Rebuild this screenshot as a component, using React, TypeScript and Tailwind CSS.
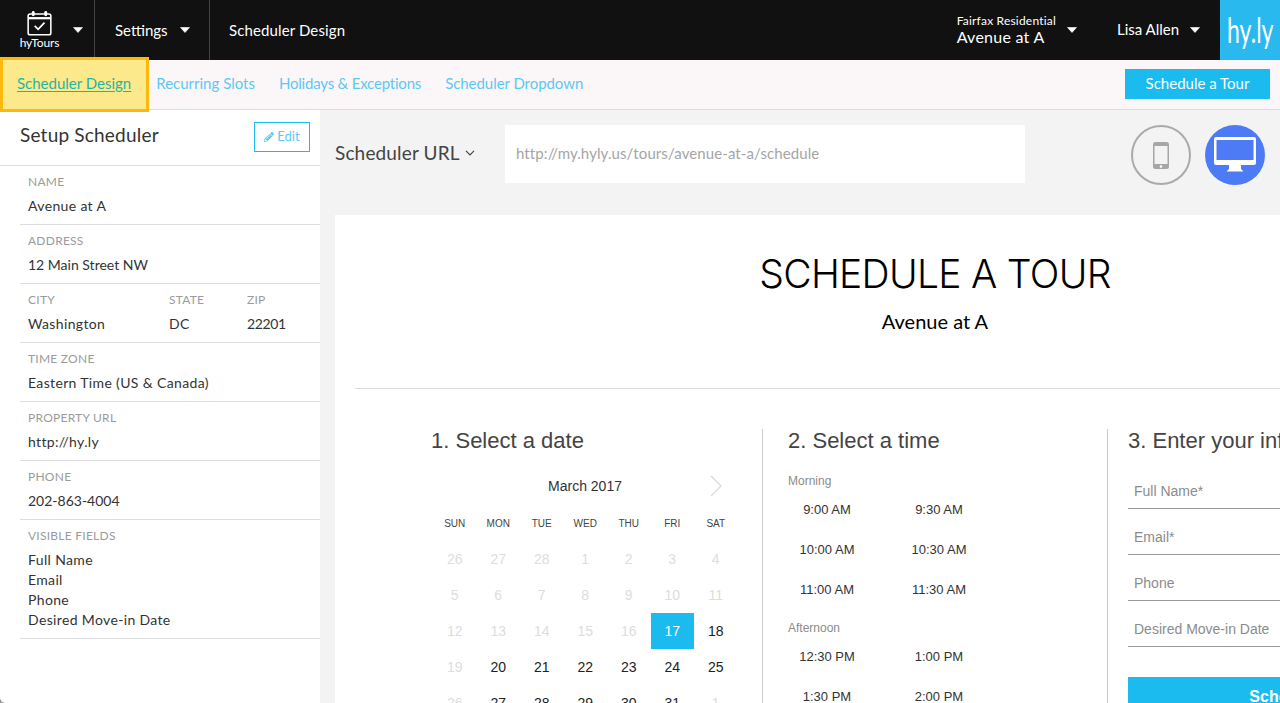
import React from "react";
import { FaPencilAlt } from "react-icons/fa";

const Caret = ({ className = "" }: { className?: string }) => (
  <svg width="10" height="6" viewBox="0 0 10 6" className={className}><path d="M0.5 0.5h9L5 5.5z" fill="#fff" stroke="#fff" strokeWidth="0.6" strokeLinejoin="round" /></svg>
);

const Field = ({ label, children }: { label: string; children: React.ReactNode }) => (
  <div>
    <div className="text-[12px] leading-[16px] tracking-[0.25px] text-[#9b9b9b]">{label}</div>
    <div className="mt-[6px] text-[14px] leading-[20px] tracking-[0.35px] text-[#333]">{children}</div>
  </div>
);

const Row = ({ children }: { children: React.ReactNode }) => (
  <div className="h-[59px] border-b border-[#ddd] pl-[8px] pt-[8px]">{children}</div>
);

const weeks: [string, number][][] = [
  [["26", 0], ["27", 0], ["28", 0], ["1", 0], ["2", 0], ["3", 0], ["4", 0]],
  [["5", 0], ["6", 0], ["7", 0], ["8", 0], ["9", 0], ["10", 0], ["11", 0]],
  [["12", 0], ["13", 0], ["14", 0], ["15", 0], ["16", 0], ["17", 2], ["18", 1]],
  [["19", 0], ["20", 1], ["21", 1], ["22", 1], ["23", 1], ["24", 1], ["25", 1]],
  [["26", 0], ["27", 1], ["28", 1], ["29", 1], ["30", 1], ["31", 1], ["1", 0]],
];

const Times = ({ items }: { items: string[] }) => (
  <div className="-ml-[17px] grid w-[224px] grid-cols-2">
    {items.map((t) => (
      <div key={t} className="flex h-[40px] items-center justify-center text-[13px] text-[#333]">{t}</div>
    ))}
  </div>
);

const Input = ({ label }: { label: string }) => (
  <div className="flex h-[46px] items-end border-b border-[#999] pb-[7px] pl-[6px] text-[14px] leading-[20px] text-[#8c8c8c]">{label}</div>
);

export default function App() {
  return (
    <div className="h-[703px] w-[1280px] overflow-hidden bg-[#999]">
      <div className="relative flex h-[703px] w-[1280px] flex-col overflow-hidden rounded-bl-[6px] bg-[#f3f3f3] font-['Lato',sans-serif]">
        {/* top bar */}
        <header className="flex h-[60px] shrink-0 items-stretch bg-[#111] text-white">
          <div className="flex w-[95px] items-center border-r border-[#444] pl-[20px]">
            <div className="flex w-[39px] flex-col items-center">
              <svg width="25" height="26" viewBox="0 0 26 27" fill="none" stroke="#fff">
                <rect x="1.2" y="4.2" width="23.6" height="21.6" rx="2" strokeWidth="1.6" />
                <path d="M1.2 8.5h23.6" strokeWidth="2.4" />
                <rect x="5" y="1" width="3" height="5.5" rx="1.5" fill="#fff" stroke="none" />
                <rect x="18" y="1" width="3" height="5.5" rx="1.5" fill="#fff" stroke="none" />
                <path d="M8 16.5l3.6 3.6 6.6-7" strokeWidth="1.8" />
              </svg>
              <div className="text-[12px] leading-[14px] tracking-[-0.1px]">hyTours</div>
            </div>
            <Caret className="ml-[14px]" />
          </div>
          <div className="flex w-[115px] items-center border-r border-[#444] pl-[20px] text-[15px]">
            Settings<Caret className="ml-[12px]" />
          </div>
          <div className="flex flex-1 items-center pl-[19px] text-[15px] tracking-[0.12px]">Scheduler Design</div>
          <div className="flex items-center pr-[20px]">
            <div className="pb-[1px]">
              <div className="text-[12px] leading-[14px] tracking-[0.2px]">Fairfax Residential</div>
              <div className="text-[16px] leading-[18px] tracking-[0.25px]">Avenue at A</div>
            </div>
            <Caret className="ml-[11px]" />
            <div className="ml-[40px] w-[63px] pb-[2px] text-[15px]">Lisa Allen</div>
            <Caret className="ml-[10px]" />
          </div>
          <div className="flex w-[60px] items-center justify-center bg-[#29b9ee] pb-[2px] text-[34px]">
            <span className="inline-block scale-x-[0.68]">hy.ly</span>
          </div>
        </header>

        {/* sub nav */}
        <nav className="flex h-[50px] shrink-0 items-center border-b border-[#ddd] bg-[#fbf7f8] pb-[1px] pl-[17px] pr-[10px] text-[15px] text-[#5bc8f5]">
          <div className="flex pb-[2px]">
            <a className="relative z-10 text-[#1eb6a4] underline underline-offset-2">Scheduler Design</a>
            <a className="ml-[25px]">Recurring Slots</a>
            <a className="ml-[24px] tracking-[-0.2px]">Holidays &amp; Exceptions</a>
            <a className="ml-[24px] tracking-[-0.05px]">Scheduler Dropdown</a>
          </div>
          <button className="ml-auto h-[30px] w-[145px] bg-[#1bbbf0] pb-[2px] text-[15px] text-white">Schedule a Tour</button>
        </nav>
        <div className="pointer-events-none absolute left-0 top-[57px] h-[55px] w-[149px] border-[3px] border-[#fdb90b] bg-[#fce98c]" />

        <div className="flex min-h-0 flex-1">
          {/* sidebar */}
          <aside className="w-[320px] shrink-0 bg-white">
            <div className="flex h-[56px] items-start justify-between border-b border-[#ddd] pl-[20px] pr-[10px] pt-[12px]">
              <h2 className="text-[19px] leading-[26px] tracking-[0.2px] text-[#333]">Setup Scheduler</h2>
              <button className="flex h-[30px] w-[56px] items-center justify-center gap-[3px] border border-[#1bbbf0] text-[13px] text-[#5bc8f5]">
                <FaPencilAlt className="h-[10px] w-[10px]" />Edit
              </button>
            </div>
            <div className="pl-[20px]">
              <Row><Field label="NAME">Avenue at A</Field></Row>
              <Row><Field label="ADDRESS"><span className="tracking-normal">12 Main Street NW</span></Field></Row>
              <Row>
                <div className="flex">
                  <div className="w-[141px]"><Field label="CITY">Washington</Field></div>
                  <div className="w-[78px]"><Field label="STATE">DC</Field></div>
                  <div><Field label="ZIP"><span className="tracking-[-0.4px]">22201</span></Field></div>
                </div>
              </Row>
              <Row><Field label="TIME ZONE">Eastern Time (US &amp; Canada)</Field></Row>
              <Row><Field label="PROPERTY URL">http://hy.ly</Field></Row>
              <Row><Field label="PHONE"><span className="tracking-normal">202-863-4004</span></Field></Row>
              <div className="h-[119px] border-b border-[#ddd] pl-[8px] pt-[8px]">
                <Field label="VISIBLE FIELDS">
                  <div>Full Name</div>
                  <div>Email</div>
                  <div>Phone</div>
                  <div>Desired Move-in Date</div>
                </Field>
              </div>
            </div>
          </aside>

          {/* main */}
          <main className="min-w-0 flex-1 overflow-hidden pl-[15px] pt-[15px]">
            <div className="flex h-[60px] items-start">
              <div className="flex h-[56px] w-[170px] items-center text-[19px] tracking-[0.15px] text-[#444]">
                Scheduler URL
                <svg width="10" height="6" viewBox="0 0 10 6" fill="none" stroke="#444" strokeWidth="1.2" className="ml-[5px]"><path d="M1 0.8l4 4 4-4" /></svg>
              </div>
              <div className="flex h-[58px] w-[520px] items-center bg-white pb-[1px] pl-[11px] text-[15px] tracking-[0.1px] text-[#a5a5a5]">http://my.hyly.us/tours/avenue-at-a/schedule</div>
              <div className="ml-[106px] flex h-[60px] w-[60px] items-center justify-center rounded-full border-2 border-[#aaa]">
                <svg width="16" height="27" viewBox="0 0 16 27">
                  <path fillRule="evenodd" fill="#a6a6a6" d="M2.5 0h11A2.5 2.5 0 0 1 16 2.5v22a2.5 2.5 0 0 1-2.5 2.5h-11A2.5 2.5 0 0 1 0 24.500v-22A2.500 2.500 0 0 1 2.500 0zM1.500 4v18h13V4z" />
                  <circle cx="8" cy="24.500" r="1.300" fill="#fff" />
                </svg>
              </div>
              <div className="ml-[14px] flex h-[60px] w-[60px] items-center justify-center rounded-full bg-[#4c7bf5]">
                <svg width="42" height="36" viewBox="0 0 42 36">
                  <path fillRule="evenodd" fill="#fff" d="M2 0h38a2 2 0 0 1 2 2v24a2 2 0 0 1-2 2H2a2 2 0 0 1-2-2V2a2 2 0 0 1 2-2zM2.500 3v20h37V3z" />
                  <path fill="#fff" d="M15 28h12v4l2.500 2.500h-17L15 32z" />
                </svg>
              </div>
            </div>

            <section className="mt-[30px] h-[600px] w-[1200px] bg-white px-[20px] font-['Liberation_Sans',sans-serif]">
              <div className="h-[174px] border-b border-[#ddd] pt-[35px] text-center">
                <h1 className="font-['Inter',sans-serif] text-[39px] font-light leading-[48px] tracking-[-0.7px] text-black">SCHEDULE A TOUR</h1>
                <div className="mt-[10px] font-['Lato',sans-serif] text-[20px] leading-[26px] text-black">Avenue at A</div>
              </div>
              <div className="mt-[40px] flex">
                {/* date */}
                <div className="h-[300px] w-[408px] border-r border-[#ccc] pl-[76px]">
                  <h3 className="text-[22px] font-normal leading-[24px] text-[#444]">1. Select a date</h3>
                  <div className="relative ml-[2px] mt-[21px] w-[304px]">
                    <div className="flex h-[24px] w-[304px] items-center justify-center text-[14px] text-[#333]">March 2017</div>
                    <svg width="12" height="22" viewBox="0 0 12 22" fill="none" stroke="#d8d8d8" strokeWidth="1.2" className="absolute right-[15px] top-[1px]"><path d="M1 1l10 10L1 21" /></svg>
                    <div className="mt-[18px] grid grid-cols-[repeat(7,43.5px)] text-center text-[10px] leading-[16px] text-[#444]">
                      {["SUN", "MON", "TUE", "WED", "THU", "FRI", "SAT"].map((d) => <div key={d}>{d}</div>)}
                    </div>
                    <div className="mt-[9px] grid grid-cols-[repeat(7,43.5px)] auto-rows-[36px] text-center text-[14px]">
                      {weeks.flat().map(([d, s], i) => (
                        <div key={i} className={s === 2 ? "flex items-center justify-center bg-[#1bbbf0] text-white" : s === 1 ? "flex items-center justify-center text-[#222]" : "flex items-center justify-center text-[#ddd]"}>{d}</div>
                      ))}
                    </div>
                  </div>
                </div>
                {/* time */}
                <div className="h-[300px] w-[345px] border-r border-[#ccc] pl-[25px]">
                  <h3 className="text-[22px] font-normal leading-[24px] text-[#444]">2. Select a time</h3>
                  <div className="mt-[21px] text-[12px] leading-[14px] text-[#8c8c8c]">Morning</div>
                  <div className="mt-[2px]"><Times items={["9:00 AM", "9:30 AM", "10:00 AM", "10:30 AM", "11:00 AM", "11:30 AM"]} /></div>
                  <div className="mt-[11px] text-[12px] leading-[14px] text-[#8c8c8c]">Afternoon</div>
                  <div className="mt-[2px]"><Times items={["12:30 PM", "1:00 PM", "1:30 PM", "2:00 PM"]} /></div>
                </div>
                {/* form */}
                <div className="w-[400px] pl-[20px]">
                  <h3 className="text-[22px] font-normal leading-[24px] text-[#444]">3. Enter your info</h3>
                  <div className="mt-[10px] w-[366px]">
                    <Input label="Full Name*" />
                    <Input label="Email*" />
                    <Input label="Phone" />
                    <Input label="Desired Move-in Date" />
                  </div>
                  <button className="mt-[30px] h-[40px] w-[366px] bg-[#1bbbf0] text-[16px] font-bold text-white">Schedule a Tour</button>
                </div>
              </div>
            </section>
          </main>
        </div>
      </div>
    </div>
  );
}
